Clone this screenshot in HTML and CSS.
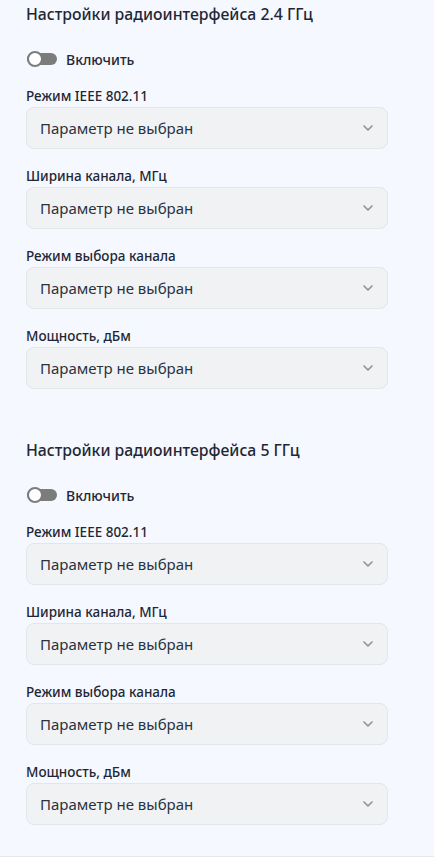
FILE: index.html
```html
<!DOCTYPE html>
<html lang="ru">
<head>
<meta charset="utf-8">
<link rel="stylesheet" href="styles.css">
</head>
<body>
<div class="panel">
  <section class="section">
    <h2 class="title">Настройки радиоинтерфейса 2.4 ГГц</h2>
    <label class="toggle-row"><span class="toggle"><span class="knob"></span></span><span class="toggle-text">Включить</span></label>
    <div class="fields">
      <div class="field"><div class="label">Режим IEEE 802.11</div><div class="select"><span>Параметр не выбран</span><svg class="chev" width="10" height="6" viewBox="0 0 10 6"><path d="M1 1l4 4 4-4" fill="none" stroke="#8b9099" stroke-width="1.6" stroke-linecap="round" stroke-linejoin="round"/></svg></div></div>
      <div class="field"><div class="label">Ширина канала, МГц</div><div class="select"><span>Параметр не выбран</span><svg class="chev" width="10" height="6" viewBox="0 0 10 6"><path d="M1 1l4 4 4-4" fill="none" stroke="#8b9099" stroke-width="1.6" stroke-linecap="round" stroke-linejoin="round"/></svg></div></div>
      <div class="field"><div class="label">Режим выбора канала</div><div class="select"><span>Параметр не выбран</span><svg class="chev" width="10" height="6" viewBox="0 0 10 6"><path d="M1 1l4 4 4-4" fill="none" stroke="#8b9099" stroke-width="1.6" stroke-linecap="round" stroke-linejoin="round"/></svg></div></div>
      <div class="field"><div class="label">Мощность, дБм</div><div class="select"><span>Параметр не выбран</span><svg class="chev" width="10" height="6" viewBox="0 0 10 6"><path d="M1 1l4 4 4-4" fill="none" stroke="#8b9099" stroke-width="1.6" stroke-linecap="round" stroke-linejoin="round"/></svg></div></div>
    </div>
  </section>
  <section class="section second">
    <h2 class="title">Настройки радиоинтерфейса 5 ГГц</h2>
    <label class="toggle-row"><span class="toggle"><span class="knob"></span></span><span class="toggle-text">Включить</span></label>
    <div class="fields">
      <div class="field"><div class="label">Режим IEEE 802.11</div><div class="select"><span>Параметр не выбран</span><svg class="chev" width="10" height="6" viewBox="0 0 10 6"><path d="M1 1l4 4 4-4" fill="none" stroke="#8b9099" stroke-width="1.6" stroke-linecap="round" stroke-linejoin="round"/></svg></div></div>
      <div class="field"><div class="label">Ширина канала, МГц</div><div class="select"><span>Параметр не выбран</span><svg class="chev" width="10" height="6" viewBox="0 0 10 6"><path d="M1 1l4 4 4-4" fill="none" stroke="#8b9099" stroke-width="1.6" stroke-linecap="round" stroke-linejoin="round"/></svg></div></div>
      <div class="field"><div class="label">Режим выбора канала</div><div class="select"><span>Параметр не выбран</span><svg class="chev" width="10" height="6" viewBox="0 0 10 6"><path d="M1 1l4 4 4-4" fill="none" stroke="#8b9099" stroke-width="1.6" stroke-linecap="round" stroke-linejoin="round"/></svg></div></div>
      <div class="field"><div class="label">Мощность, дБм</div><div class="select"><span>Параметр не выбран</span><svg class="chev" width="10" height="6" viewBox="0 0 10 6"><path d="M1 1l4 4 4-4" fill="none" stroke="#8b9099" stroke-width="1.6" stroke-linecap="round" stroke-linejoin="round"/></svg></div></div>
    </div>
  </section>
</div>
</body>
</html>
```

FILE: styles.css
```css
html, body {
  margin: 0;
  padding: 0;
  background: #ffffff;
}
body {
  font-family: "Noto Sans", "Open Sans", sans-serif;
  color: #1f2733;
}
.panel {
  background: #f5f8fe;
  border-bottom: 1px solid #e3e6eb;
  padding: 3px 46px 31px 26px;
}
.section.second {
  margin-top: 50px;
}
.title {
  margin: 0;
  font-size: 15.8px;
  line-height: 22px;
  font-weight: 500;
  color: #1f2733;
}
.toggle-row {
  display: flex;
  align-items: center;
  gap: 9px;
  margin-top: 24px;
  height: 20px;
  padding-left: 1px;
}
.toggle {
  position: relative;
  width: 30px;
  height: 12px;
  border-radius: 6px;
  background: #7c7c7c;
  display: block;
}
.knob {
  position: absolute;
  left: 0;
  top: -2px;
  width: 12px;
  height: 12px;
  border-radius: 50%;
  background: #ffffff;
  border: 2px solid #7c7c7c;
}
.toggle-text {
  font-size: 14px;
  font-weight: 500;
  color: #1f2733;
}
.fields {
  display: flex;
  flex-direction: column;
  gap: 18px;
  margin-top: 18px;
}
.label {
  font-size: 13.5px;
  line-height: 18px;
  font-weight: 500;
  color: #1f2733;
  margin-bottom: 2px;
}
.select {
  height: 40px;
  border: 1px solid #e3e5e9;
  border-radius: 8px;
  background: #f1f2f4;
  display: flex;
  align-items: center;
  justify-content: space-between;
  padding: 0 14px 0 13px;
  font-size: 15px;
  color: #2a3240;
}
.chev {
  display: block;
}
```
